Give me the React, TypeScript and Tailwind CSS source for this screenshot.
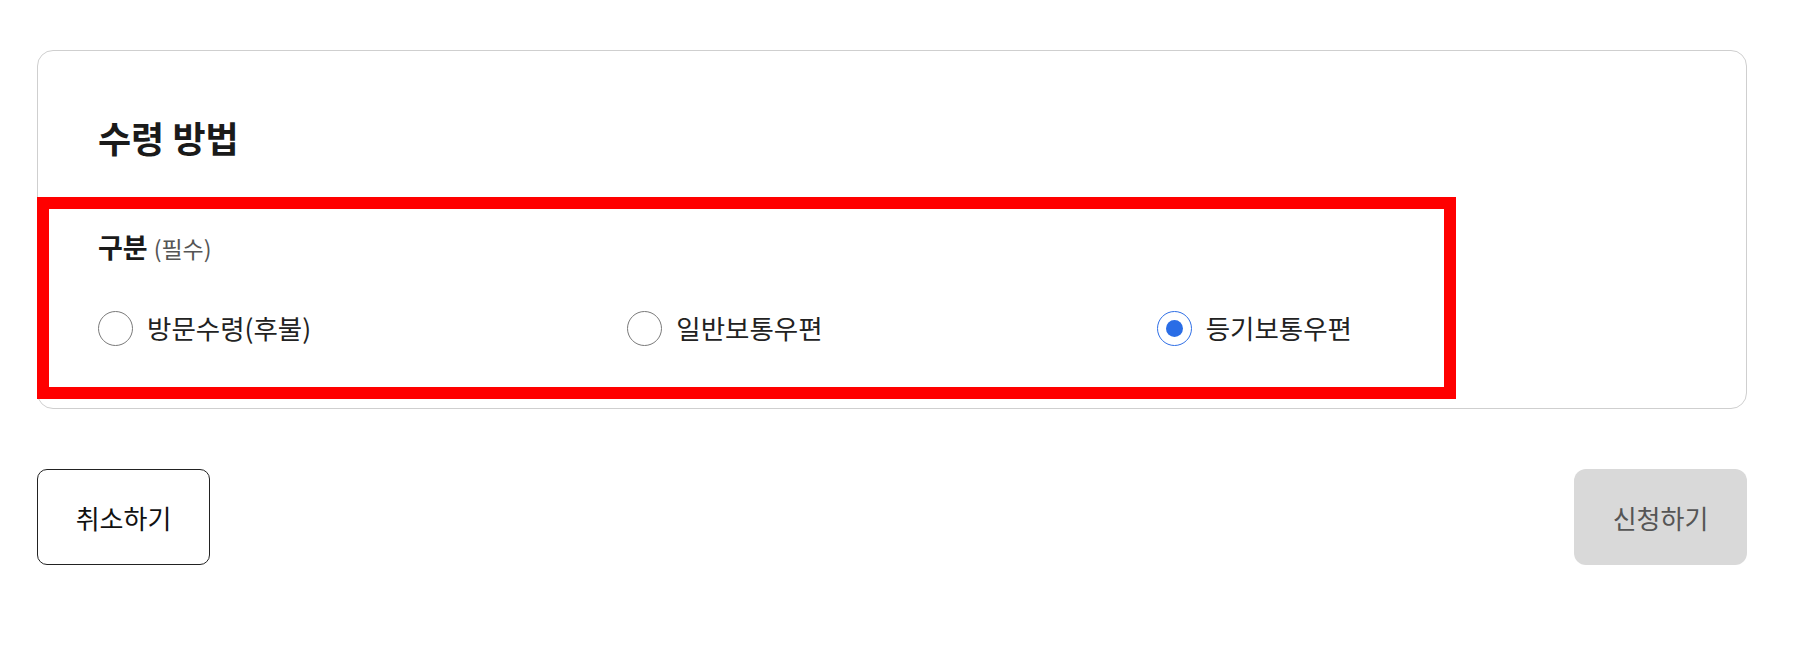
import { useState } from "react";

const options = ["방문수령(후불)", "일반보통우편", "등기보통우편"];

export default function App() {
  const [selected, setSelected] = useState(2);

  return (
    <div className="min-h-screen bg-white pt-[50px] pl-[37px] font-['Noto_Sans_CJK_KR','Noto_Sans',sans-serif] text-[#222]">
      <div className="w-[1710px]">
        {/* 카드 */}
        <div className="relative rounded-[16px] border border-[#cfcfcf] bg-white px-[60px] pt-[66px] pb-[62px]">
          <h2 className="text-[36px] leading-[40px] font-bold text-[#1a1a1a]">
            수령 방법
          </h2>

          <div className="mt-[74px] flex items-baseline gap-[6px]">
            <span className="text-[27px] leading-[32px] font-bold text-[#1a1a1a]">구분</span>
            <span className="text-[23px] leading-[32px] text-[#555]">(필수)</span>
          </div>

          <div className="mt-[46px] grid grid-cols-3">
            {options.map((label, i) => (
              <label
                key={label}
                className="flex items-center gap-[14px] cursor-pointer"
                onClick={() => setSelected(i)}
              >
                <span
                  className={
                    selected === i
                      ? "flex h-[35px] w-[35px] items-center justify-center rounded-full border border-[#2f6fe6] bg-white"
                      : "flex h-[35px] w-[35px] items-center justify-center rounded-full border border-[#7a7a7a] bg-white"
                  }
                >
                  {selected === i && (
                    <span className="h-[17px] w-[17px] rounded-full bg-[#2a6de6]" />
                  )}
                </span>
                <span className="text-[26.5px] leading-[36px] text-[#222]">{label}</span>
              </label>
            ))}
          </div>

          {/* 강조 표시 */}
          <div className="pointer-events-none absolute left-[-1px] top-[146px] h-[202px] w-[1419px] border-[12px] border-[#ff0000]" />
        </div>

        {/* 버튼 */}
        <div className="mt-[60px] flex justify-between">
          <button className="h-[96px] w-[173px] rounded-[10px] border border-[#222] bg-white text-[26px] text-[#111]">
            취소하기
          </button>
          <button
            disabled
            className="h-[96px] w-[173px] rounded-[12px] bg-[#d9d9d9] text-[26px] text-[#555]"
          >
            신청하기
          </button>
        </div>
      </div>
    </div>
  );
}
